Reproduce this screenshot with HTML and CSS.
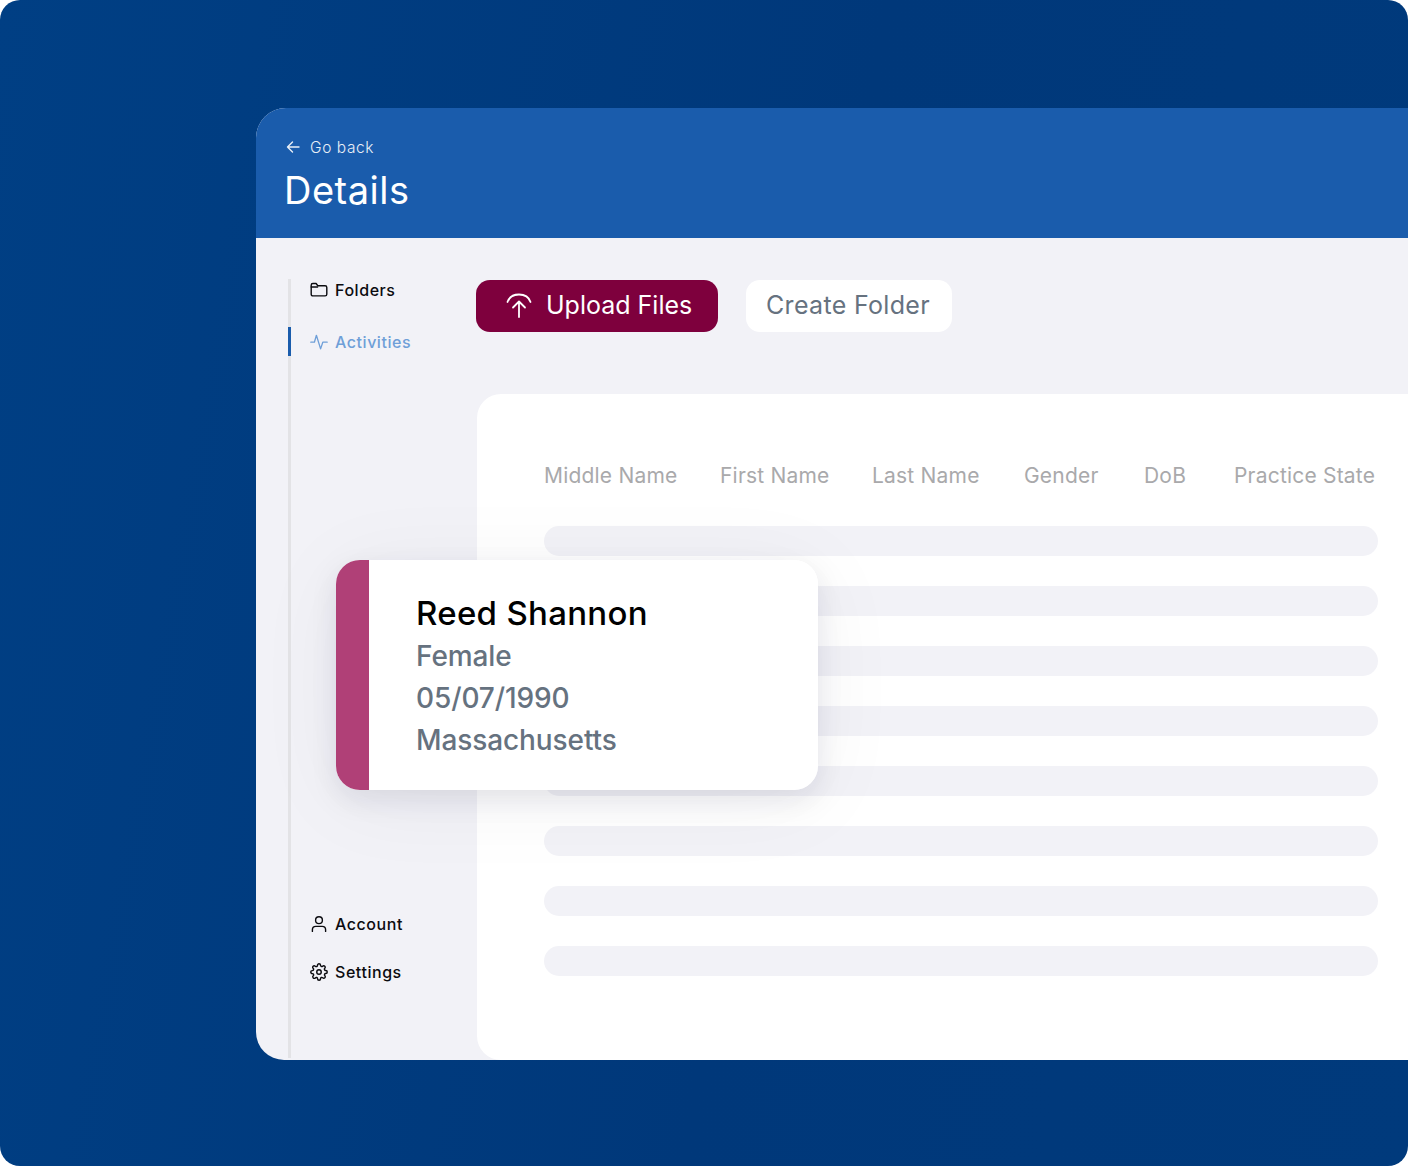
FILE: index.html
```html
<!DOCTYPE html>
<html lang="en">
<head>
<meta charset="utf-8">
<title>Details</title>
<link rel="stylesheet" href="styles.css">
</head>
<body>
<div class="stage">
  <div class="window">
    <header class="top">
      <a class="back">
        <svg class="back-icon" viewBox="0 0 16 16" fill="none" stroke="currentColor" stroke-width="1.4" stroke-linecap="round" stroke-linejoin="round"><path d="M14 8H2.5M7.5 3 2.5 8l5 5"/></svg>
        <span>Go back</span>
      </a>
      <h1 class="title">Details</h1>
    </header>
    <div class="main">
      <nav class="side">
        <div class="side-group">
          <div class="nav-item">
            <svg class="nav-icon" viewBox="0 0 18 18" fill="none" stroke="currentColor" stroke-width="1.4" stroke-linecap="round" stroke-linejoin="round"><path d="M1.2 4.2c0-1 .7-1.7 1.7-1.7h3.2l1.7 2.2h7.3c1 0 1.7.7 1.7 1.7v6.8c0 1-.7 1.7-1.7 1.7H2.9c-1 0-1.7-.7-1.7-1.7z"/><path d="M1.2 6h6.4"/></svg>
            <span>Folders</span>
          </div>
          <div class="nav-item active">
            <svg class="nav-icon" viewBox="0 0 18 18" fill="none" stroke="currentColor" stroke-width="1.3" stroke-linecap="round" stroke-linejoin="round"><path d="M.8 9.2h3.6l2-6.9 4.2 13.6 2.2-6.7h4.4"/></svg>
            <span>Activities</span>
          </div>
        </div>
        <div class="side-group lower">
          <div class="nav-item">
            <svg class="nav-icon" viewBox="0 0 18 18" fill="none" stroke="currentColor" stroke-width="1.4" stroke-linecap="round" stroke-linejoin="round"><circle cx="9" cy="5.2" r="3.4"/><path d="M2.4 16.4v-1.6c0-1.9 1.5-3.4 3.4-3.4h6.4c1.9 0 3.4 1.5 3.4 3.4v1.6"/></svg>
            <span>Account</span>
          </div>
          <div class="nav-item">
            <svg class="nav-icon" viewBox="0 0 24 24" fill="none" stroke="currentColor" stroke-width="1.9" stroke-linecap="round" stroke-linejoin="round"><circle cx="12" cy="12" r="3"/><path d="M19.4 15a1.65 1.65 0 0 0 .33 1.82l.06.06a2 2 0 1 1-2.83 2.83l-.06-.06a1.65 1.65 0 0 0-2.82 1.17V21a2 2 0 1 1-4 0v-.09A1.65 1.65 0 0 0 7.2 19.8l-.06.06a2 2 0 1 1-2.83-2.83l.06-.06a1.65 1.65 0 0 0-1.17-2.82H3a2 2 0 1 1 0-4h.09A1.65 1.65 0 0 0 4.2 7.2l-.06-.06a2 2 0 1 1 2.83-2.83l.06.06a1.65 1.65 0 0 0 1.82.33H9a1.65 1.65 0 0 0 1-1.51V3a2 2 0 1 1 4 0v.09a1.65 1.65 0 0 0 2.82 1.17l.06-.06a2 2 0 1 1 2.83 2.83l-.06.06a1.65 1.65 0 0 0-.33 1.82V9a1.65 1.65 0 0 0 1.51 1H21a2 2 0 1 1 0 4h-.09a1.65 1.65 0 0 0-1.51 1z"/></svg>
            <span>Settings</span>
          </div>
        </div>
      </nav>
      <section class="content">
        <div class="actions">
          <button class="btn primary">
            <svg class="upload-icon" viewBox="0 0 26 26" fill="none" stroke="currentColor" stroke-width="1.8" stroke-linecap="round" stroke-linejoin="round"><path d="M1.5 10C3 5.5 7.4 2.5 13 2.5s10 3 11.5 7.5"/><path d="M13 25V9.5M7 15.5l6-6 6 6"/></svg>
            <span>Upload Files</span>
          </button>
          <button class="btn secondary">Create Folder</button>
        </div>
        <div class="panel">
          <div class="columns">
            <span>Middle Name</span>
            <span>First Name</span>
            <span>Last Name</span>
            <span>Gender</span>
            <span>DoB</span>
            <span>Practice State</span>
          </div>
          <div class="rows">
            <div class="row"></div>
            <div class="row"></div>
            <div class="row"></div>
            <div class="row"></div>
            <div class="row"></div>
            <div class="row"></div>
            <div class="row"></div>
            <div class="row"></div>
          </div>
        </div>
      </section>
    </div>
  </div>
  <article class="card">
    <div class="card-stripe"></div>
    <div class="card-body">
      <h2 class="card-name">Reed Shannon</h2>
      <p class="card-line">Female</p>
      <p class="card-line">05/07/1990</p>
      <p class="card-line">Massachusetts</p>
    </div>
  </article>
</div>
</body>
</html>
```
FILE: styles.css
```css
* { box-sizing: border-box; }
html, body { margin: 0; padding: 0; background: #fff; }
body { font-family: "Inter", "Liberation Sans", sans-serif; }

.stage {
  position: relative;
  width: 1408px;
  height: 1166px;
  padding: 108px 0 106px 256px;
  border-radius: 20px;
  overflow: hidden;
  background: linear-gradient(100deg, #003f84 0%, #00387a 55%, #003a7c 100%);
}

.window {
  display: flex;
  flex-direction: column;
  height: 952px;
  border-radius: 30px 0 0 28px;
  overflow: hidden;
  background: #f2f2f7;
}

.top {
  height: 130px;
  flex: none;
  padding: 28px 0 0 29px;
  background: #1a5cac;
  color: #fff;
}
.back {
  display: flex;
  align-items: center;
  gap: 9px;
  height: 22px;
  font-size: 15.5px;
  letter-spacing: 0.6px;
  font-weight: 300;
  color: #e9eff7;
}
.back-icon { width: 16px; height: 16px; }
.title {
  margin: 9px 0 0 -1px;
  font-size: 38px;
  line-height: 46px;
  font-weight: 400;
  letter-spacing: 0.5px;
}

.main { flex: 1; display: flex; min-height: 0; }

.side {
  position: relative;
  width: 221px;
  flex: none;
  margin: 41px 0 2px 32px;
  padding: 0 0 72px 19px;
  border-left: 3px solid #e3e3e6;
  display: flex;
  flex-direction: column;
  justify-content: space-between;
}
.side-group { display: flex; flex-direction: column; gap: 23px; margin-top: -4px; }
.side-group.lower { gap: 19px; }
.nav-item {
  position: relative;
  display: flex;
  align-items: center;
  gap: 7px;
  height: 29px;
  font-size: 16px;
  font-weight: 500;
  letter-spacing: 0.55px;
  color: #0b0b0f;
}
.nav-item.active { color: #6f9fd8; }
.nav-item.active::before {
  content: "";
  position: absolute;
  left: -22px;
  top: 0;
  width: 3px;
  height: 29px;
  background: #1a5cac;
}
.nav-icon { width: 18px; height: 18px; flex: none; }

.content { flex: 1; display: flex; flex-direction: column; min-width: 0; padding-top: 42px; margin-left: -32px; }
.actions { display: flex; gap: 28px; margin-left: -1px; }
.btn {
  display: flex;
  align-items: center;
  height: 52px;
  padding: 0 0 2px;
  border: 0;
  border-radius: 14px;
  font-family: inherit;
  font-size: 25px;
  font-weight: 400;
}
.btn.primary {
  width: 242px;
  padding-left: 30px;
  gap: 14px;
  letter-spacing: 0;
  background: #7e003d;
  color: #fff;
}
.btn.secondary {
  width: 206px;
  padding-left: 20px;
  letter-spacing: 0.32px;
  background: #fff;
  color: #66727f;
}
.upload-icon { width: 26px; height: 26px; flex: none; }

.panel {
  flex: 1;
  margin-top: 62px;
  padding: 66px 30px 0 67px;
  border-radius: 24px 0 0 24px;
  background: #fff;
}
.columns {
  display: grid;
  grid-template-columns: 176px 152px 152px 120px 90px 1fr;
  height: 30px;
  align-items: center;
  font-size: 21px;
  letter-spacing: 0.2px;
  color: #a9a9ab;
  white-space: nowrap;
}
.rows { display: flex; flex-direction: column; gap: 30px; margin-top: 36px; }
.row { height: 30px; border-radius: 15px; background: #f2f2f7; }

.card {
  position: absolute;
  left: 336px;
  top: 560px;
  width: 482px;
  height: 230px;
  display: flex;
  border-radius: 24px;
  overflow: hidden;
  background: #fff;
  z-index: 1;
}
.stage::after {
  content: "";
  position: absolute;
  left: 336px;
  top: 560px;
  width: 482px;
  height: 230px;
  border-radius: 24px;
  box-shadow: 0 10px 28px rgba(20, 20, 50, 0.09), 0 10px 90px rgba(20, 20, 50, 0.05);
  pointer-events: none;
}
.card-stripe { width: 33px; flex: none; background: #b04077; }
.card-body { padding: 32px 0 0 47px; }
.card-name {
  margin: 0;
  font-size: 33px;
  line-height: 43px;
  font-weight: 500;
  letter-spacing: 0.3px;
  color: #000;
}
.card-line {
  margin: 0;
  font-size: 28px;
  line-height: 42px;
  font-weight: 500;
  letter-spacing: -0.1px;
  color: #66727f;
}
```
